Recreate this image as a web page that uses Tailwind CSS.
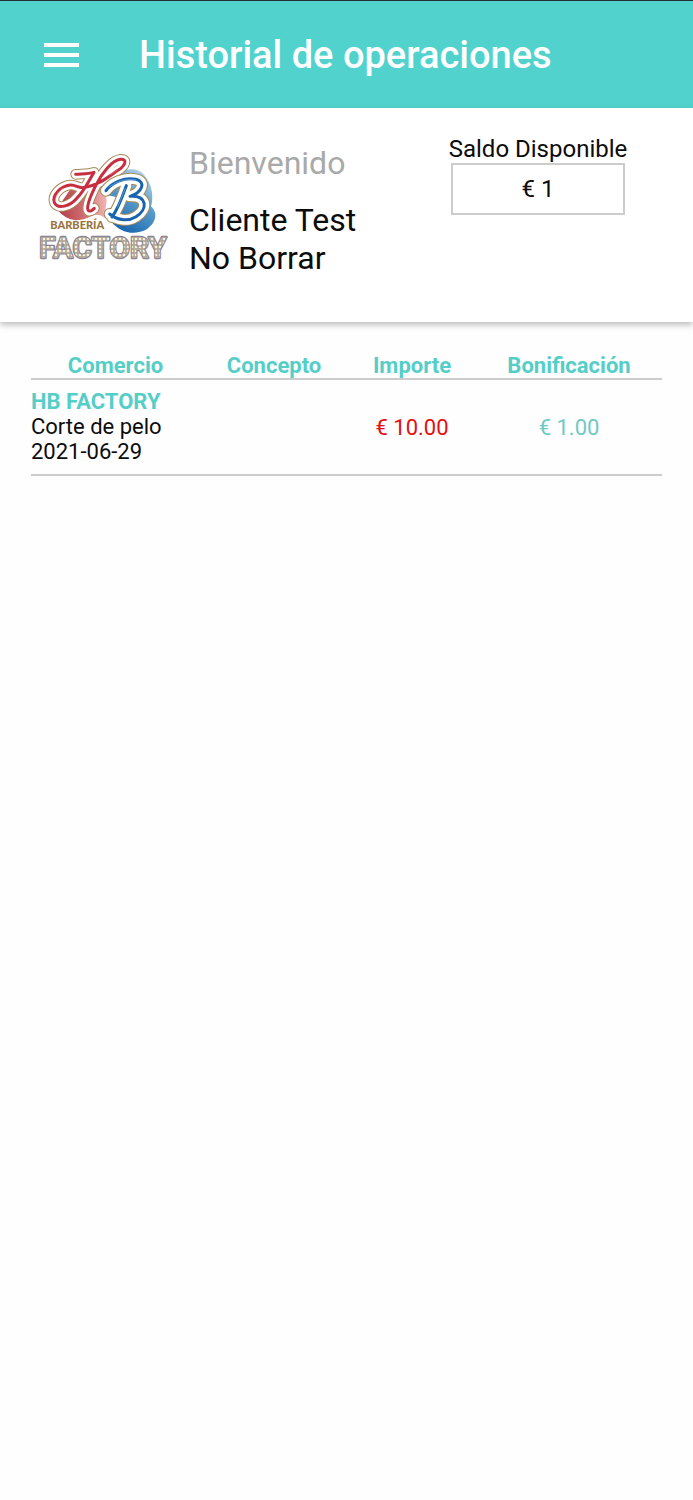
<!DOCTYPE html>
<html lang="es">
<head>
<meta charset="utf-8">
<meta name="viewport" content="width=device-width, initial-scale=1">
<title>Historial de operaciones</title>
<script src="https://cdn.jsdelivr.net/npm/@tailwindcss/browser@4"></script>
</head>
<body class="min-h-screen bg-[#fefefe] font-['Roboto',sans-serif] text-[#0c0c0c]">
<header class="flex items-center gap-[60px] border-t border-[#222f33] bg-[#51d2cd] px-11 h-[108px]">
  <button type="button" aria-label="Abrir menú" class="shrink-0">
    <svg class="block w-[35px] h-6" viewBox="0 0 35 24" fill="#fff"><path d="M0 0h35v4H0zM0 10h35v4H0zM0 20h35v4H0z"/></svg>
  </button>
  <h1 class="text-[38px] leading-[44px] font-medium text-white whitespace-nowrap">Historial de operaciones</h1>
</header>
<section class="flex items-start bg-white px-[30px] pt-[27px] pb-[45px] shadow-[0_3px_6px_rgba(0,0,0,0.25)]">
  <svg class="mt-2.5 w-[145px] h-[125px] shrink-0" viewBox="0 0 435 375" role="img" aria-label="HB Barbería Factory">
    <defs>
      <linearGradient id="red" x1="0" y1="0" x2="1" y2="0"><stop offset="0" stop-color="#b33b44"/><stop offset=".5" stop-color="#cf6a70"/><stop offset="1" stop-color="#f0b5b3"/></linearGradient>
      <linearGradient id="blue" x1="0.9" y1="0" x2="0.4" y2="1"><stop offset="0" stop-color="#c4ddf0"/><stop offset=".5" stop-color="#5b9fd0"/><stop offset="1" stop-color="#1c68ad"/></linearGradient>
      <pattern id="bulbs" width="12" height="12" patternUnits="userSpaceOnUse"><rect width="12" height="12" fill="#b3a994"/><circle cx="6" cy="6" r="4" fill="#f6f1df"/></pattern>
      <path id="h" d="M137 88C153 86 173 88 192 82C178 104 163 137 142 158C120 184 83 195 73 172C66 151 91 123 121 120C140 119 144 132 166 127C210 119 239 92 264 76C287 61 293 42 272 43C246 45 216 84 198 120C184 148 169 183 174 195C178 202 187 196 193 190"/>
      <path id="b" d="M228 137C245 113 282 96 318 103C349 110 337 143 300 154C353 151 354 193 318 215C290 232 260 224 239 207M289 122C278 153 266 190 246 216"/>
    </defs>
    <path d="M91 177L125 127L165 132L215 105L230 165L224 218Q205 203 185 213Q160 226 136 226Q105 222 82 194Z" fill="url(#red)"/>
    <path d="M250 97C279 65 330 65 347 96C367 120 371 158 363 184C388 207 375 239 345 256C306 273 267 259 244 230L287 163L235 151Z" fill="url(#blue)"/>
    <g fill="none" stroke-linecap="round" stroke-linejoin="round">
      <use href="#h" stroke="#a58a58" stroke-width="32"/><use href="#h" stroke="#fff" stroke-width="26"/>
      <use href="#h" stroke="#c72f40" stroke-width="9"/>
      <path d="M76 165Q79 144 98 130M242 88L261 75" stroke="#e98990" stroke-width="2"/>
      <use href="#b" stroke="#a58a58" stroke-width="36"/><use href="#b" stroke="#fff" stroke-width="30"/>
      <use href="#b" stroke="#1763ae" stroke-width="9"/>
      <path d="M237 126Q277 96 318 105M286 130L263 186" stroke="#75b4e4" stroke-width="2"/>
    </g>
    <text x="61" y="252" font-family="Lato, sans-serif" font-weight="900" font-size="33" fill="#9a733c">BARBERÍA</text>
    <text x="28" y="338" font-family="Roboto, sans-serif" font-weight="700" font-size="89" fill="url(#bulbs)" stroke="#89849a" stroke-width="7" stroke-linejoin="round" paint-order="stroke">FACTORY</text>
  </svg>
  <div class="ml-3.5 mt-[9px] w-[190px] shrink-0 text-[32px] leading-[38px]">
    <p class="text-[#a9a9a9]">Bienvenido</p>
    <p class="mt-[19px]">Cliente Test No Borrar</p>
  </div>
  <div class="flex flex-1 flex-col items-center pl-[34px] text-2xl leading-7">
    <p class="whitespace-nowrap">Saldo Disponible</p>
    <p class="flex h-[52px] w-[174px] items-center justify-center border-2 border-[#cccccc]">€ 1</p>
  </div>
</section>
<main class="px-[31px] pt-[29px]">
  <table class="w-full table-fixed border-collapse text-[22px] leading-[25px]">
    <colgroup><col class="w-[169px]"><col class="w-[148px]"><col class="w-[128px]"><col class="w-[186px]"></colgroup>
    <thead>
      <tr class="border-b-2 border-[#cccccc] text-[#56cec8]">
        <th scope="col" class="pt-0.5">Comercio</th><th scope="col" class="pt-0.5">Concepto</th><th scope="col" class="pt-0.5">Importe</th><th scope="col" class="pt-0.5">Bonificación</th>
      </tr>
    </thead>
    <tbody>
      <tr class="border-b-2 border-[#cccccc] text-center">
        <td class="pt-[9px] pb-2.5 text-left"><strong class="block font-bold text-[#56cec8]">HB FACTORY</strong><span class="block">Corte de pelo</span><span class="block">2021-06-29</span></td>
        <td></td>
        <td class="text-[#e60f0f]">€ 10.00</td>
        <td class="text-[#70c8c6]">€ 1.00</td>
      </tr>
    </tbody>
  </table>
</main>
</body>
</html>
